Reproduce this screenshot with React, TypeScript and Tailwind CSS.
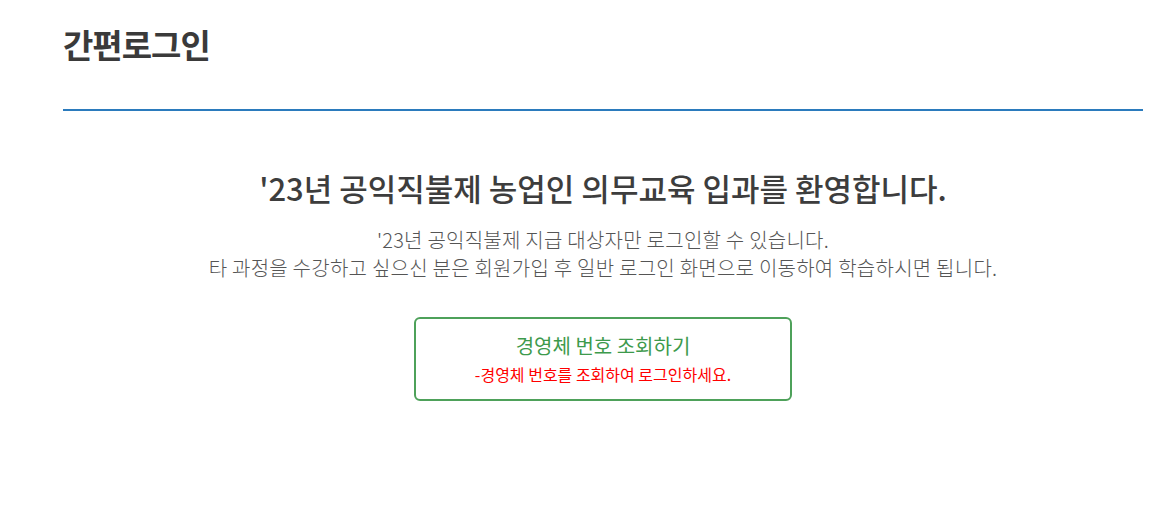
export default function App() {
  return (
    <div
      className="min-h-[527px] bg-white"
      style={{ fontFamily: '"Noto Sans CJK KR", "Noto Sans", sans-serif' }}
    >
      <div className="ml-[63px] w-[1080px]">
        <div className="pt-[21px] pb-[42px] border-b-2 border-[#2b7bbd]">
          <h1 className="text-[33px] leading-[46px] font-bold text-[#3a3a3a] tracking-[-1px]">
            간편로그인
          </h1>
        </div>
        <div className="flex flex-col items-center pt-[57px]">
          <h2 className="text-[31px] leading-[40px] font-medium text-[#3d3d3d]">
            '23년 공익직불제 농업인 의무교육 입과를 환영합니다.
          </h2>
          <p className="mt-[18px] text-center text-[20px] leading-[28px] font-light text-[#555] tracking-[0.25px]">
            '23년 공익직불제 지급 대상자만 로그인할 수 있습니다.
            <br />
            타 과정을 수강하고 싶으신 분은 회원가입 후 일반 로그인 화면으로 이동하여 학습하시면 됩니다.
          </p>
          <button className="mt-[35px] w-[378px] h-[84px] rounded-[6px] border-2 border-[#4ea15a] flex flex-col items-center justify-start pt-[14px]">
            <span className="text-[20px] leading-[26px] text-[#3d9a4c]">경영체 번호 조회하기</span>
            <span className="mt-[4px] text-[16px] leading-[22px] text-[#ff0000]">
              -경영체 번호를 조회하여 로그인하세요.
            </span>
          </button>
        </div>
      </div>
    </div>
  );
}
